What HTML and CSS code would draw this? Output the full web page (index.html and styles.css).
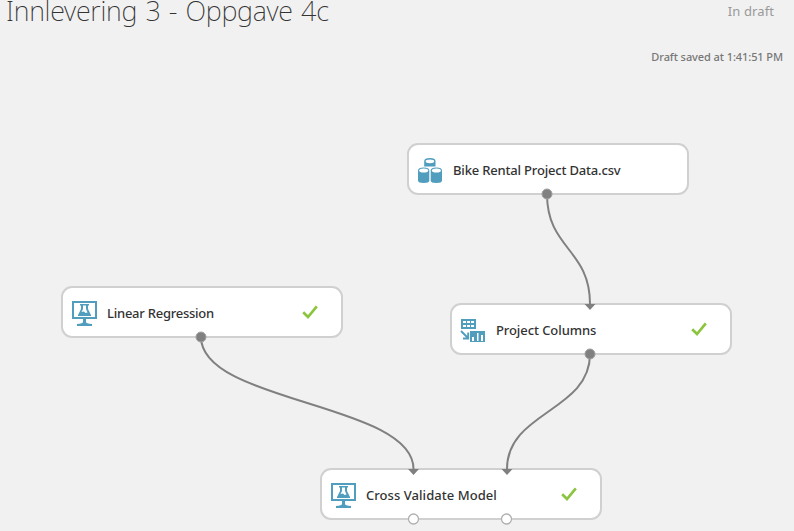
FILE: index.html
```html
<!DOCTYPE html>
<html lang="no">
<head>
<meta charset="utf-8">
<title>Innlevering 3 - Oppgave 4c</title>
<link rel="stylesheet" href="styles.css">
</head>
<body>
<svg class="defs" aria-hidden="true">
  <symbol id="check" viewBox="0 0 16 14"><path d="M1.2 7.2 6 12 14.8 1.4" fill="none" stroke="#8bc53f" stroke-width="2.700"/></symbol>
  <symbol id="experiment" viewBox="0 0 25 25">
    <path fill="#509dbe" fill-rule="evenodd" d="M0 0H25V18H14V21Q14 22.5 20 23V25H5V23Q11 22.5 11 21V18H0ZM2 2V16H23V2Z"/>
    <path fill="#509dbe" fill-rule="evenodd" d="M8 3H17V4.5H16V8L19 14V15H6V14L9 8V4.5H8ZM11 4.500V8L9.500 11L12 10.500L13.500 12L15.500 11.500L14 8V4.500Z"/>
  </symbol>
</svg>
<main class="canvas">
  <header class="header">
    <h1 class="title">Innlevering 3 - Oppgave 4c</h1>
    <div class="status">
      <span class="state">In draft</span>
      <span class="saved">Draft saved at 1:41:51 PM</span>
    </div>
  </header>

  <section class="node node-data">
    <svg class="icon" viewBox="0 0 25 25">
      <g fill="#509dbe">
        <path d="M6.200 3Q6.200 0 12 0Q17.500 0 17.500 3V8.500H6.200Z"/>
        <path d="M0 12.500Q0 9.500 5.700 9.500Q11.300 9.500 11.300 12.500V22.500Q11.300 25 5.700 25Q0 25 0 22.500Z"/>
        <path d="M12.700 12.500Q12.700 9.500 18.400 9.500Q24 9.500 24 12.500V22.500Q24 25 18.400 25Q12.700 25 12.700 22.500Z"/>
      </g>
      <g fill="#fff"><ellipse cx="11.900" cy="3.300" rx="4.300" ry="1.900"/><ellipse cx="5.700" cy="12.500" rx="4.500" ry="2"/><ellipse cx="18.400" cy="12.500" rx="4.500" ry="2"/></g>
    </svg>
    <span class="label label-data">Bike Rental Project Data.csv</span>
  </section>

  <section class="node node-regression">
    <svg class="icon"><use href="#experiment"/></svg>
    <span class="label label-regression">Linear Regression</span>
    <svg class="check"><use href="#check"/></svg>
  </section>

  <section class="node node-columns">
    <svg class="icon" viewBox="0 0 25 25">
      <path fill="#509dbe" d="M1 1H16V11H1ZM10 13H25V24H10Z"/>
      <path fill="#fff" d="M3 3h3v2H3zM7 3h3v2H7zM11 3h3v2h-3zM3 7h3v2H3zM7 7h3v2H7zM11 7h3v2h-3zM12 19h2v4h-2zM17 15h1.500v8h-1.500zM21 17h2v6h-2z"/>
      <path fill="none" stroke="#509dbe" stroke-width="1.900" d="M1 13 8 20M8.200 14.500V20.500H3"/>
    </svg>
    <span class="label label-columns">Project Columns</span>
    <svg class="check"><use href="#check"/></svg>
  </section>

  <section class="node node-model">
    <svg class="icon"><use href="#experiment"/></svg>
    <span class="label label-model">Cross Validate Model</span>
    <svg class="check"><use href="#check"/></svg>
  </section>

  <svg class="wires" viewBox="0 0 794 531">
    <g fill="none" stroke="#808080" stroke-width="2">
      <path d="M547 194C547 249 590 249 590 304"/>
      <path d="M201 337C201 403 413.500 403 413.500 469"/>
      <path d="M590 354C590 411.500 507 411.500 507 469"/>
    </g>
    <g fill="#808080">
      <path d="M584.500 304H595.500L590 310ZM408 469H419L413.500 475ZM501.500 469H512.500L507 475Z"/>
      <g stroke="#a0a0a0"><circle cx="547" cy="194" r="5"/><circle cx="201" cy="337" r="5"/><circle cx="590" cy="354" r="5"/></g>
    </g>
    <g fill="#fff" stroke="#b0b0b0" stroke-width="1.300"><circle cx="413.500" cy="519" r="5"/><circle cx="506.500" cy="519" r="5"/></g>
  </svg>
</main>
</body>
</html>
```
FILE: styles.css
```css
* { box-sizing: border-box; }
body { margin: 0; background: #f1f1f1; font-family: "Noto Sans", "Open Sans", sans-serif; }
.defs { display: none; }
.canvas { position: relative; width: 794px; height: 531px; overflow: hidden; }
.header { display: flex; justify-content: space-between; padding: 0 11px 0 6px; }
.title { margin: -8px 0 0; font-size: 27px; line-height: 38px; font-weight: 200; color: #333; white-space: nowrap; letter-spacing: -0.260px; word-spacing: 1.500px; }
.status { display: flex; flex-direction: column; align-items: flex-end; white-space: nowrap; }
.state { padding-right: 9px; margin-top: 1px; font-size: 13px; line-height: 20px; letter-spacing: 0.100px; color: #999; }
.saved { margin-top: 26px; font-size: 11px; line-height: 20px; font-weight: 500; letter-spacing: -0.080px; color: #777; }
.node { position: absolute; display: flex; align-items: center; width: 282px; height: 52px; padding: 0 23px 0 9px; border: 2px solid #d0d0d0; border-radius: 11px; background: #fff; }
.node-data { left: 407px; top: 143px; }
.node-regression { left: 61px; top: 286px; }
.node-columns { left: 450px; top: 303px; }
.node-model { left: 320px; top: 468px; }
.icon { flex: none; width: 25px; height: 25px; margin-top: 3px; }
.node-columns .icon { margin-left: -1px; margin-right: 1px; }
.label { margin: 2px 0 0 10px; font-size: 13px; line-height: 20px; font-weight: 500; color: #333; white-space: nowrap; }
.label-data { letter-spacing: -0.180px; }
.label-regression { letter-spacing: -0.240px; }
.label-columns { letter-spacing: -0.080px; }
.label-model { letter-spacing: 0.050px; }
.check { width: 16px; height: 14px; margin-left: auto; margin-top: -1px; }
.wires { position: absolute; inset: 0; width: 794px; height: 531px; }
```
